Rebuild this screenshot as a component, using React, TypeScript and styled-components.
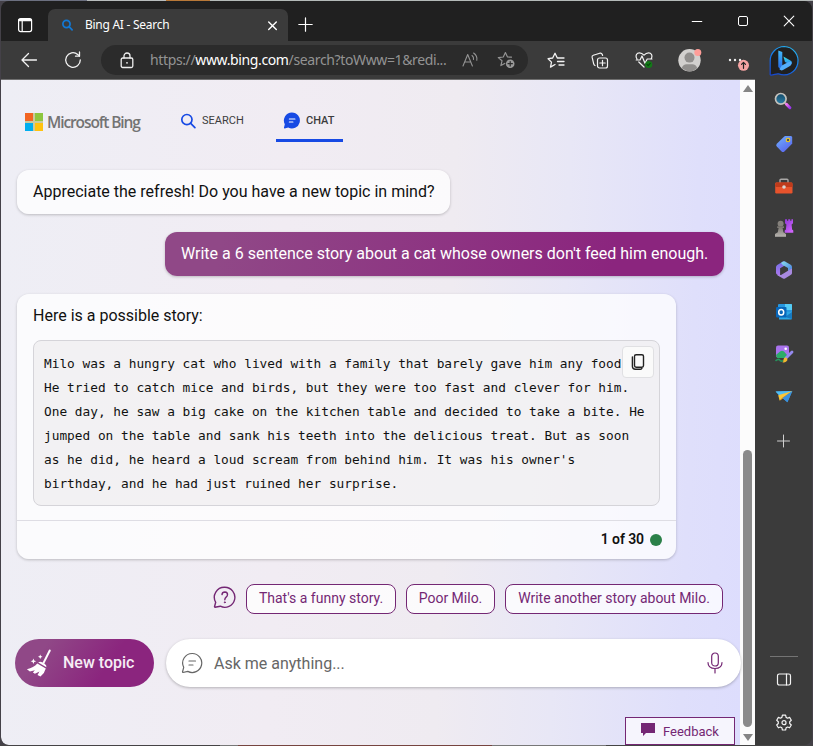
import React from "react";
import styled, { createGlobalStyle } from "styled-components";

const Global = createGlobalStyle`
  * { box-sizing: border-box; }
  html, body { margin: 0; padding: 0; overflow: hidden; }
  button { font: inherit; padding: 0; margin: 0; border: 0; background: none; color: inherit; }
  svg { display: block; flex: none; }
`;

const ui = `"Noto Sans", "Open Sans", sans-serif`;
const plum = "#742774";

const Desktop = styled.div`
  width: 813px;
  height: 746px;
  padding: 1px;
  background: linear-gradient(90deg, #6c7080 0 87px, #b8bcbc 87px 166px, #b87838 166px 210px, #b4bab8 210px) top / 100% 1px no-repeat,
    linear-gradient(90deg, #454345 0 220px, #777 220px 238px, #76443f 238px 492px, #777 492px 606px, #444 606px) bottom / 100% 1px no-repeat,
    #444148;
`;

const Window = styled.div`
  width: 811px;
  height: 744px;
  display: flex;
  flex-direction: column;
  overflow: hidden;
  border-radius: 8px;
  background: #3b3b3b;
`;

const TitleBar = styled.header`
  height: 40px;
  flex: none;
  display: flex;
  background: #202020;
  color: #fff;
  padding-top: 8px;
`;

const TabActions = styled.button`
  width: 47px;
  display: flex;
  padding: 7px 0 0 16px;
`;

const Tab = styled.div`
  width: 240px;
  height: 32px;
  display: flex;
  align-items: center;
  padding: 0 10px 0 14px;
  border-radius: 7px 7px 0 0;
  background: #3b3b3b;
`;

const TabTitle = styled.span`
  flex: 1;
  margin-left: 12px;
  font: 12px/16px ${ui};
  letter-spacing: -0.27px;
  white-space: nowrap;
`;

const NewTab = styled.button`
  width: 34px;
  height: 31px;
  display: grid;
  place-items: center;
`;

const WindowButtons = styled.div`
  margin-left: auto;
  display: flex;
  height: 24px;
`;

const WindowButton = styled.button`
  width: 46px;
  display: grid;
  place-items: center;
`;

const Body = styled.div`
  flex: 1;
  min-height: 0;
  display: flex;
`;

const Main = styled.div`
  width: 754px;
  flex: none;
  display: flex;
  flex-direction: column;
`;

const Toolbar = styled.nav`
  height: 39px;
  flex: none;
  display: flex;
  align-items: center;
  border-bottom: 1px solid #707070;
  color: #f3f3f3;
`;

const ToolButton = styled.button<{ $w?: number }>`
  width: ${(p) => p.$w ?? 44}px;
  height: 38px;
  flex: none;
  display: grid;
  place-items: center;
`;

const Address = styled.div`
  width: 427px;
  flex: none;
  height: 30px;
  margin: 0 6px 0 12px;
  display: flex;
  align-items: center;
  padding: 0 12px 0 19px;
  border-radius: 15px;
  background: #2b2b2b;
  color: #939393;
`;

const Url = styled.span`
  width: 298px;
  margin-left: 16px;
  font: 14px/20px ${ui};
  letter-spacing: -0.37px;
  white-space: nowrap;
  b { font-weight: 400; color: #fff; }
`;

const AddressIcons = styled.div`
  margin-left: auto;
  display: flex;
  align-items: center;
  gap: 18px;
`;

const Viewport = styled.div`
  flex: 1;
  display: flex;
  min-height: 0;
`;

const Page = styled.main`
  width: 739px;
  height: 665px;
  flex: none;
  position: relative;
  z-index: 1;
  display: flex;
  flex-direction: column;
  background: linear-gradient(92deg, #eeeef5 0%, #f1ecf3 38%, #efebf1 60%, #e8e7f6 75%, #dfdffb 92%, #ddddfd 100%);
  font-family: Roboto, sans-serif;
  border-radius: 0 0 0 7px;
`;

const PageHeader = styled.div`
  height: 62px;
  display: flex;
  padding-left: 24px;
`;

const Brand = styled.div`
  display: flex;
  align-items: center;
  width: 155px;
  height: 22px;
  margin-top: 31px;
  gap: 4px;
`;

const BrandName = styled.span`
  font: 600 15.5px/22px "Open Sans", sans-serif;
  letter-spacing: -1.1px;
  color: #737373;
  white-space: nowrap;
`;

const NavTab = styled.a<{ $active?: boolean; $w: number }>`
  width: ${(p) => p.$w}px;
  height: 43px;
  margin-top: 19px;
  display: flex;
  align-items: center;
  gap: 6px;
  font-size: 11px;
  font-weight: ${(p) => (p.$active ? 500 : 400)};
  color: #3c3c3c;
  ${(p) => p.$active && "padding: 3px 0 0 7px; border-bottom: 3px solid #174ae4; margin-left: 20px;"}
`;

const Bubble = styled.div<{ $mine?: boolean }>`
  width: ${(p) => (p.$mine ? 559 : 433)}px;
  height: 44px;
  margin: ${(p) => (p.$mine ? "18px 0 0 164px" : "28px 0 0 16px")};
  padding: 0 16px;
  border-radius: 12px;
  font-size: 16px;
  line-height: 43px;
  white-space: nowrap;
  color: ${(p) => (p.$mine ? "#fff" : "#111")};
  background: ${(p) => (p.$mine ? "linear-gradient(100deg, #904887 10%, #8b257e 80%)" : "rgba(255,255,255,.76)")};
  box-shadow: 0 1px 3px rgba(0, 0, 0, 0.22);
`;

const Card = styled.article`
  width: 659px;
  height: 265px;
  margin: 18px 0 0 16px;
  display: flex;
  flex-direction: column;
  border-radius: 12px;
  background: rgba(255, 255, 255, 0.76);
  box-shadow: 0 1px 3px rgba(0, 0, 0, 0.22);
`;

const Intro = styled.p`
  height: 46px;
  margin: 0;
  padding: 0 16px;
  font-size: 16px;
  line-height: 43px;
  color: #111;
`;

const CodeBox = styled.div`
  position: relative;
  height: 166px;
  margin: 0 16px 14px;
  padding: 11px 10px;
  border: 1px solid #d5d4d9;
  border-radius: 8px;
  background: rgba(233, 231, 234, 0.5);
`;

const Story = styled.pre`
  margin: 0;
  font: 12.8px/24px "DejaVu Sans Mono", monospace;
  letter-spacing: -0.005px;
  color: #111;
`;

const CopyButton = styled.button`
  position: absolute;
  top: 5px;
  right: 5px;
  width: 32px;
  height: 32px;
  display: grid;
  place-items: center;
  border: 1px solid #e0e0e3;
  border-radius: 4px;
  background: #fafafa;
`;

const CardFooter = styled.footer`
  flex: 1;
  display: flex;
  align-items: center;
  justify-content: flex-end;
  gap: 6px;
  padding: 0 14px 2px 0;
  border-top: 1px solid #dedde4;
  font-size: 14px;
  font-weight: 600;
  letter-spacing: -0.1px;
  color: #111;
`;

const Dot = styled.i`
  width: 12px;
  height: 12px;
  margin-top: 2px;
  border-radius: 50%;
  background: #2b8049;
`;

const Suggestions = styled.div`
  height: 30px;
  margin: 25px 17px 0 0;
  display: flex;
  justify-content: flex-end;
  align-items: center;
  gap: 10px;
`;

const HelpIcon = styled.span`
  margin: -2px 0 0 0;
`;

const Suggestion = styled.button<{ $w: number }>`
  width: ${(p) => p.$w}px;
  height: 30px;
  border: 1px solid ${plum};
  border-radius: 8px;
  background: rgba(255, 255, 255, 0.76);
  font-size: 14px;
  line-height: 26px;
  padding-bottom: 2px;
  color: ${plum};
  white-space: nowrap;
`;

const Composer = styled.div`
  height: 48px;
  margin: 25px 0 0 14px;
  display: flex;
  gap: 12px;
`;

const NewTopic = styled.button`
  width: 139px;
  flex: none;
  display: flex;
  align-items: center;
  gap: 10px;
  padding: 0 0 1px 11px;
  border-radius: 24px;
  background: linear-gradient(125deg, #904887 20%, #8b257e 65%);
  color: #f6edf5;
  font-size: 16px;
  font-weight: 500;
  white-space: nowrap;
`;

const Ask = styled.div`
  width: 575px;
  flex: none;
  display: flex;
  align-items: center;
  padding: 0 18px 0 15px;
  border-radius: 24px;
  background: #fff;
  box-shadow: 0 1px 3px rgba(0, 0, 0, 0.26);
  font-size: 16px;
  color: #666;
`;

const Placeholder = styled.span`
  flex: 1;
  margin-left: 11px;
`;

const Feedback = styled.button`
  align-self: flex-end;
  width: 110px;
  height: 28px;
  margin: 30px 5px 0 0;
  display: flex;
  align-items: center;
  gap: 8px;
  padding-left: 15px;
  border: 1px solid ${plum};
  background: #f6f5fd;
  color: ${plum};
  font-size: 13px;
`;

const FlagIcon = styled.svg`
  margin-top: -4px;
`;

const Scrollbar = styled.div`
  width: 15px;
  display: flex;
  flex-direction: column;
  align-items: center;
  padding: 5px 0 4px;
  background: #fcfcfc;
`;

const Thumb = styled.div`
  width: 9px;
  height: 277px;
  margin: auto 0 7px;
  border-radius: 5px;
  background: #8b8b8b;
`;

const Sidebar = styled.aside`
  flex: 1;
  display: flex;
  flex-direction: column;
  align-items: center;
  color: #f3f3f3;
  padding-left: 1px;
`;

const SideItem = styled.button<{ $h?: number }>`
  width: 42px;
  height: ${(p) => p.$h ?? 42}px;
  flex: none;
  display: grid;
  place-items: center;
`;

const Divider = styled.hr`
  width: 28px;
  height: 1px;
  border: 0;
  margin: auto 0 2px;
  background: #747474;
`;

const story = `Milo was a hungry cat who lived with a family that barely gave him any food.
He tried to catch mice and birds, but they were too fast and clever for him.
One day, he saw a big cake on the kitchen table and decided to take a bite. He
jumped on the table and sank his teeth into the delicious treat. But as soon
as he did, he heard a loud scream from behind him. It was his owner's
birthday, and he had just ruined her surprise.`;

type IconProps = { w: number; h?: number; sw?: number; color?: string; children: React.ReactNode };
const Icon = ({ w, h = w, sw = 1.2, color = "currentColor", children }: IconProps) => (
  <svg width={w} height={h} viewBox={`0 0 ${w} ${h}`} fill="none" stroke={color} strokeWidth={sw} strokeLinecap="round" strokeLinejoin="round">
    {children}
  </svg>
);

const MagnifierIcon = () => (
  <svg width="20" height="18" viewBox="0 0 20 18">
    <defs>
      <linearGradient id="lens" x2="0" y2="1"><stop stopColor="#154a68" /><stop offset="1" stopColor="#2b80a8" /></linearGradient>
      <linearGradient id="handle" x2="1" y2="1"><stop stopColor="#f078ed" /><stop offset="1" stopColor="#9c35ee" /></linearGradient>
    </defs>
    <path d="m10.5 10.5 2 2" stroke="#aaa" strokeWidth="2" />
    <path d="m12.5 12.3 3.4 3.4" stroke="url(#handle)" strokeWidth="3" strokeLinecap="round" />
    <circle cx="6.8" cy="6.8" r="5.3" fill="url(#lens)" stroke="#c3c1bc" strokeWidth="1.7" />
  </svg>
);

const TagIcon = () => (
  <svg width="18" height="18" viewBox="0 0 18 18">
    <defs><linearGradient id="tag" x2=".7" y2="1"><stop stopColor="#71b4ff" /><stop offset="1" stopColor="#5965ed" /></linearGradient></defs>
    <path d="M9 1.7 10 1h6.2l1 1v6.2l-.8 1.2-7 7q-1.4 1.2-2.8 0l-4.8-4.9q-1.3-1.4 0-2.8Z" fill="url(#tag)" />
    <circle cx="13" cy="5" r="1.8" fill="#4b5260" stroke="#f3cc1b" strokeWidth="1.1" />
  </svg>
);

const ToolboxIcon = () => (
  <svg width="20" height="18" viewBox="0 0 20 18">
    <path d="M6 6V3.3q0-1 1-1h6q1 0 1 1V6" fill="none" stroke="#a9a7a6" strokeWidth="1.4" />
    <rect x="1.2" y="5.5" width="17.3" height="11" rx="1.2" fill="#e7532c" />
    <path d="M2 5.5h15.9l1 3.5-1.2 1H2L1 9Z" fill="#bf3b1b" />
    <circle cx="10" cy="10" r="1.8" fill="#d7d5d2" />
  </svg>
);

const ChessIcon = () => (
  <svg width="20" height="20" viewBox="0 0 20 20">
    <defs>
      <linearGradient id="pawn" x2="0" y2="1"><stop stopColor="#77736e" /><stop offset="1" stopColor="#b7b4af" /></linearGradient>
      <linearGradient id="rook" x2=".7" y2="1"><stop stopColor="#8e37d7" /><stop offset="1" stopColor="#cf65fb" /></linearGradient>
    </defs>
    <path d="M11 1.2h2v1.5h1.2V1.2h2v1.5h1.2V1.2H19v4l-1.4 1.3.5 5 1.2 1v2.2h-8.6v-2.2l1.2-1 .5-5L11 5.2Z" fill="url(#rook)" />
    <circle cx="6.6" cy="5.7" r="3" fill="#85817c" />
    <path d="M3.2 8.3H10v1.8H8.6l.8 4.2 2.6 1.8v2.7H1v-2.7l2.8-1.8.8-4.2H3.2Z" fill="url(#pawn)" />
  </svg>
);

const OfficeIcon = () => (
  <svg width="18" height="20" viewBox="0 0 18 20">
    <defs>
      <linearGradient id="o1" x2="0" y2="1"><stop stopColor="#716fe6" /><stop offset="1" stopColor="#b078ee" /></linearGradient>
      <linearGradient id="o2" x2="1" y2="1"><stop stopColor="#8ae0ed" /><stop offset="1" stopColor="#4275dd" /></linearGradient>
    </defs>
    <path d="M8 1.5 2.2 5Q1 5.8 1 7.2v5.5q0 1.2 1 1.9l3.1 1.8V8.2L12 4.3 10 1.6Q9 1 8 1.5Z" fill="url(#o1)" />
    <path d="m8 1.5 2-.1 5.7 3.4Q17 5.7 17 7v6.5l-4-2.7V8L8 5.2 6 3Z" fill="url(#o2)" />
    <path d="m13 10.8 4-2.4v4.5q0 1.2-1 1.9l-6 3.7q-1 .5-2 0l-6-3.6 4 .2Z" fill="#a889df" />
  </svg>
);

const OutlookIcon = () => (
  <svg width="18" height="18" viewBox="0 0 18 18">
    <rect x="3" y="1" width="14" height="12" rx="1" fill="#2797df" />
    <path d="M10 1h6q1 0 1 1v5h-7z" fill="#55ccf5" />
    <path d="M4 9h13v6.5q0 1-1 1H4Z" fill="#2ca6e5" />
    <path d="m17 9-7 5 7 2Z" fill="#177ac1" />
    <rect x="1" y="4" width="10.5" height="10.5" rx="1" fill="#0866b9" />
    <ellipse cx="6.2" cy="9.3" rx="2.5" ry="2.8" fill="none" stroke="#fff" strokeWidth="1.5" />
  </svg>
);

const ImageIcon = () => (
  <svg width="20" height="20" viewBox="0 0 20 20">
    <rect x="2" y="1.5" width="13" height="12" rx="2" fill="#a973ed" />
    <circle cx="11.7" cy="4.8" r="1.3" fill="#fff" />
    <path d="m2 11 4-3.5q2-1.4 4 0L13 11v3H3Z" fill="#2cab68" />
    <path d="M1.5 16.8q3-2.3 4.2-.8.8 1.7 3.8.8" fill="none" stroke="#27945d" strokeWidth="1.6" />
    <path d="m12 14 6-6" stroke="#9589ef" strokeWidth="2.8" strokeLinecap="round" />
    <path d="M10 14.2q2-1.4 3.2.2 1 2-1.2 3.4-2 1.2-3.6.4 1.4-.6.9-2Z" fill="#f2b92e" />
  </svg>
);

const PlaneIcon = () => (
  <svg width="20" height="16" viewBox="-.6 0 20 16">
    <path d="M1 3.4 17.7 3 12.8 14.3 7.5 9.8Z" fill="#3fa4e8" />
    <path d="m1 3.4 16.7-.4L4.6 7.6Z" fill="#4fbdf6" />
    <path d="M17.7 3 3.6 7.2 5 12.6Z" fill="#fac638" />
    <path d="M17.7 3 7.3 10 5 13Z" fill="#d9921f" />
    <path d="M17.7 3 12.8 14.3 8 10Z" fill="#398fdd" />
  </svg>
);

const BingIcon = () => (
  <svg width="32" height="32" viewBox="0 0 32 32">
    <defs>
      <linearGradient id="ring" x1=".7" y1="0" x2=".2" y2="1"><stop stopColor="#27b2ed" /><stop offset=".4" stopColor="#1680ed" /><stop offset="1" stopColor="#1748cf" /></linearGradient>
      <linearGradient id="bstem" x2="0" y2="1"><stop stopColor="#42bafa" /><stop offset="1" stopColor="#2465e6" /></linearGradient>
      <linearGradient id="bbowl" x2="0" y2="1"><stop stopColor="#3bdee4" /><stop offset="1" stopColor="#2987ee" /></linearGradient>
    </defs>
    <path d="M16.2 1.5a14.2 14.2 0 1 1-5.6 27.4c-2-.7-4.7 1.3-7.6 1.3-1.2 0-.8-1.3-.8-2.1V15.7A14.2 14.2 0 0 1 16.2 1.5Z" fill="#202020" stroke="url(#ring)" strokeWidth="1.2" />
    <path d="m10.3 5.6 4 1.5v14l-1.2 3.8-2.8-2.8Z" fill="url(#bstem)" />
    <path d="m15.4 11.6 7 3.9q2.4 1.6 1 3.7L20 18.6l-3-1.7Z" fill="url(#bbowl)" />
    <path d="m20 17.3-6.2 3.3-2.4 3.7q1.7 1.8 3.6.8l7.4-4.4q1.8-1.7.7-4.2Z" fill="#53aefa" />
  </svg>
);

const gearPath = "M7.4 1.2h3.2l.5 2.2 1.5.8 2-.8 1.7 2.8-1.6 1.5v1.8l1.6 1.5-1.7 2.8-2-.8-1.5.8-.5 2.2H7.4l-.5-2.2-1.5-.8-2 .8-1.7-2.8 1.6-1.5V7.7L1.7 6.2l1.7-2.8 2 .8 1.5-.8Z";

export default function App() {
  return (
    <>
      <Global />
      <Desktop>
        <Window>
          <TitleBar>
            <TabActions aria-label="Tab actions">
              <Icon w={16} h={17} sw={1.2}><rect x="1.6" y="2.6" width="13" height="13" rx="2" /><path d="M2.5 4h11.2" strokeWidth="2.6" /><path d="M5.2 5v10" /></Icon>
            </TabActions>
            <Tab>
              <Icon w={11} h={12} sw={1.7} color="#1278d4"><circle cx="4.5" cy="5" r="3.6" /><path d="m7.3 7.8 2.8 3" /></Icon>
              <TabTitle>Bing AI - Search</TabTitle>
              <Icon w={11} sw={1.4}><path d="m1.7 1.9 7.6 7.6m0-7.6L1.7 9.5" /></Icon>
            </Tab>
            <NewTab aria-label="New tab"><Icon w={15}><path d="M7.5.8v13.4M.8 7.5h13.4" /></Icon></NewTab>
            <WindowButtons>
              <WindowButton aria-label="Minimise"><Icon w={12} sw={1}><path d="M1.2 6.5h9.6" /></Icon></WindowButton>
              <WindowButton aria-label="Maximise"><Icon w={12} sw={1}><rect x="1.5" y="1.5" width="9" height="9" rx="1.5" /></Icon></WindowButton>
              <WindowButton aria-label="Close"><Icon w={12} sw={1.1}><path d="m1.2 1.2 9.6 9.6m0-9.6-9.6 9.6" /></Icon></WindowButton>
            </WindowButtons>
          </TitleBar>
          <Body>
            <Main>
              <Toolbar>
                <ToolButton $w={56} aria-label="Back"><Icon w={18} h={16} sw={1.3}><path d="M16.5 8H2m6.5-6.5L2 8l6.5 6.5" /></Icon></ToolButton>
                <ToolButton $w={32} aria-label="Reload"><Icon w={18} sw={1.3}><path d="M16.3 9A7.3 7.3 0 1 1 13.7 3.4L15.4 5" /><path d="M15.5 1v4.2h-4" /></Icon></ToolButton>
                <Address>
                  <Icon w={14} h={17} sw={1.3} color="#eee"><rect x="1.2" y="6" width="11.6" height="9.5" rx="1.5" /><path d="M4 6V4a3 3 0 0 1 6 0v2" /><circle cx="7" cy="10.8" r=".9" fill="#eee" stroke="none" /></Icon>
                  <Url>https://<b>www.bing.com</b>/search?toWww=1&amp;redi...</Url>
                  <AddressIcons>
                    <Icon w={17} h={16} sw={1.1}><path d="m1 14 4.7-11.5L10.4 14M2.7 10h6M10 3.5q2 1.5 1.5 4M11.6 1q4 2.8 3.2 7.3" /></Icon>
                    <Icon w={19} h={18} sw={1.2}><path d="M14.5 6.2 10.5 6 8.4 1.5 6.3 6l-5 .6 3.7 3.2-1.1 4.8 3.8-2.2" /><circle cx="13.2" cy="12.7" r="4.3" fill="#999" stroke="none" /><path d="M13.2 10.5v4.4M11 12.7h4.4" stroke="#2b2b2b" /></Icon>
                  </AddressIcons>
                </Address>
                <ToolButton aria-label="Favourites"><Icon w={18} h={17} sw={1.3}><path d="M11.5 6h-1.2L8 1.3 5.7 6l-4.6.7 3.4 3.4-1 5L8 12.5M12 6h5M10.5 9.5H17M12 13h5" /></Icon></ToolButton>
                <ToolButton aria-label="Collections"><Icon w={18} h={17} sw={1.2}><path d="M4 13.5q-1-.5-1.3-1.7L1.1 5.2Q.8 3.7 2.3 3.2l6.5-2q1.8-.4 2.5 1.3l.3 1" /><rect x="6.5" y="6" width="10" height="10" rx="2" /><path d="M11.5 8.3v5.4M8.8 11h5.4" /></Icon></ToolButton>
                <ToolButton aria-label="Browser essentials"><Icon w={18} h={18} sw={1.2}><path d="M2 8C-.2 4.3 2 1.8 4.4 1.8c2 0 3.2.8 4.6 2.4 1.4-1.6 2.6-2.4 4.6-2.4C16 1.8 18.2 4.3 16 8M1.2 9H5l2-4 3 7.3L12.2 8H17M3.8 11 9 16" /><circle cx="13.7" cy="13.5" r="3.6" fill="#137a18" stroke="none" /><path d="m12 13.4 1.2 1.2 2-2.2" stroke="#07490b" /></Icon></ToolButton>
                <ToolButton $w={48} aria-label="Profile">
                  <Icon w={24} h={25}><circle cx="11.5" cy="12.3" r="11.2" fill="#d2d0ce" stroke="none" /><circle cx="11.5" cy="9.6" r="5" fill="#918f8d" stroke="none" /><path d="M3.7 20.2q1.3-4 5-4h5.6q3.7 0 5 4-7 6-15.6 0Z" fill="#918f8d" stroke="none" /><circle cx="19.8" cy="4.5" r="3.5" fill="#ff9d98" stroke="none" /></Icon>
                </ToolButton>
                <ToolButton $w={48} aria-label="Settings and more"><Icon w={24} h={22}><g fill="#eee" stroke="none"><circle cx="4" cy="11" r="1.2" /><circle cx="9" cy="11" r="1.2" /><circle cx="14" cy="11" r="1.2" /></g><circle cx="17.5" cy="16.3" r="5.5" fill="#f5a3a2" stroke="none" /><path d="M17.5 19.3v-6m-2 2 2-2 2 2" stroke="#222" /></Icon></ToolButton>
              </Toolbar>
              <Viewport>
                <Page>
                  <PageHeader>
                    <Brand>
                      <svg width="18" height="18" viewBox="0 0 18 18"><path d="M0 0h18v18H0z" fill="#c9ca9e" /><path d="M0 0h8v8H0z" fill="#f26522" /><path d="M10 0h8v8h-8z" fill="#8dc63f" /><path d="M0 10h8v8H0z" fill="#00aeef" /><path d="M10 10h8v8h-8z" fill="#ffc20e" /></svg>
                      <BrandName>Microsoft Bing</BrandName>
                    </Brand>
                    <NavTab $w={76}>
                      <Icon w={16} sw={1.7} color="#174ae4"><circle cx="6.9" cy="6.6" r="5.1" /><path d="m10.7 10.4 4.2 4.2" /></Icon>
                      SEARCH
                    </NavTab>
                    <NavTab $w={67} $active>
                      <Icon w={17} color="#fff"><path d="M8.9.5a8 8 0 1 1-3.7 15.1l-3.4.8q-1 .1-.8-.9l.8-3.2A8 8 0 0 1 8.9.5Z" fill="#174ae4" stroke="none" /><path d="M6.4 7h5.5M6.4 10h3.5" /></Icon>
                      CHAT
                    </NavTab>
                  </PageHeader>
                  <Bubble>Appreciate the refresh! Do you have a new topic in mind?</Bubble>
                  <Bubble $mine>Write a 6 sentence story about a cat whose owners don't feed him enough.</Bubble>
                  <Card>
                    <Intro>Here is a possible story:</Intro>
                    <CodeBox>
                      <Story>{story}</Story>
                      <CopyButton aria-label="Copy"><Icon w={14} h={18} sw={1.4} color="#222"><rect x="3.5" y="1.7" width="9" height="12.5" rx="1.6" /><path d="M1.4 4v9.3q0 3 3 3h4.7q1.2 0 1.8-1" /></Icon></CopyButton>
                    </CodeBox>
                    <CardFooter>1 of 30<Dot /></CardFooter>
                  </Card>
                  <Suggestions>
                    <HelpIcon>
                      <Icon w={23} h={24} sw={1.4} color={plum}><path d="M11.8 1.3a10 10 0 1 1-4.5 18.9L2 21.3l-.5-.5 1.2-4.5A10 10 0 0 1 11.8 1.3Z" /><path d="M9 8.6q.2-2.6 2.9-2.6 2.7.2 2.6 2.7 0 1.4-1.4 2.4-1.3 1-1.3 2.6" /><circle cx="11.8" cy="16.3" r=".6" fill={plum} strokeWidth=".7" /></Icon>
                    </HelpIcon>
                    <Suggestion $w={150}>That's a funny story.</Suggestion>
                    <Suggestion $w={89}>Poor Milo.</Suggestion>
                    <Suggestion $w={218}>Write another story about Milo.</Suggestion>
                  </Suggestions>
                  <Composer>
                    <NewTopic>
                      <svg width="27" height="28" viewBox="0 0 27 28" fill="#fff">
                        <path d="M23 .8q1.5-.7 1.8.9l-6.6 13-1.7-1Z" />
                        <path d="M12.4 13.2q1.8-1 3.7 0l2.2 1.2q2.6 1.4 2.1 3.8l-8.1-4.7Z" />
                        <path d="m11.3 14.6 8.5 5q-1 4.4-5.3 8l-3-1.6 2-3.6-4.6 2.3-2-1.2 2-2.3-5 1.3-3-2.2q6.8-1.5 10.4-5.7Z" />
                        <path d="m7.4 9.5.8 2 2 .8-2 .8-.8 2-.8-2-2-.8 2-.8ZM14.2 5.5l.7 1.6 1.6.6-1.6.7-.7 1.6-.6-1.6-1.6-.7 1.6-.6Z" />
                      </svg>
                      New topic
                    </NewTopic>
                    <Ask>
                      <Icon w={22} color="#666"><path d="M11.2 1.5a9.5 9.5 0 1 1-4.4 17.9L2 20.5l-.5-.5 1.2-4.7A9.5 9.5 0 0 1 11.2 1.5Z" /><path d="M8 9h6.5M8 13h4" /></Icon>
                      <Placeholder>Ask me anything...</Placeholder>
                      <Icon w={16} h={22} color={plum}><rect x="4.7" y="1" width="6.6" height="13" rx="3.3" /><path d="M1 10.5q0 6 7 6t7-6M8 16.5V21" /></Icon>
                    </Ask>
                  </Composer>
                  <Feedback>
                    <FlagIcon width="14" height="15" viewBox="0 0 14 15"><path d="M0 1h14v10H5l-3 3v-3H0Z" fill={plum} /></FlagIcon>
                    Feedback
                  </Feedback>
                </Page>
                <Scrollbar>
                  <svg width="10" height="7" viewBox="0 0 10 7"><path d="m5 0 5 7H0Z" fill="#858585" /></svg>
                  <Thumb />
                  <svg width="10" height="7" viewBox="0 0 10 7"><path d="M0 0h10L5 7Z" fill="#858585" /></svg>
                </Scrollbar>
              </Viewport>
            </Main>
            <Sidebar>
              <SideItem $h={39} aria-label="Bing"><BingIcon /></SideItem>
              <SideItem aria-label="Search"><MagnifierIcon /></SideItem>
              <SideItem $h={43} aria-label="Shopping"><TagIcon /></SideItem>
              <SideItem aria-label="Tools"><ToolboxIcon /></SideItem>
              <SideItem aria-label="Games"><ChessIcon /></SideItem>
              <SideItem aria-label="Microsoft 365"><OfficeIcon /></SideItem>
              <SideItem aria-label="Outlook"><OutlookIcon /></SideItem>
              <SideItem aria-label="Image creator"><ImageIcon /></SideItem>
              <SideItem aria-label="Drop"><PlaneIcon /></SideItem>
              <SideItem $h={48} aria-label="Customise"><Icon w={14} sw={1} color="#d0d0d0"><path d="M6.5 1v12M.5 7h12" /></Icon></SideItem>
              <Divider />
              <SideItem aria-label="Toggle sidebar"><Icon w={16} h={14}><rect x="1.5" y="1" width="13" height="11" rx="1.7" /><path d="M10.5 1v11" /></Icon></SideItem>
              <SideItem $h={44} aria-label="Settings"><Icon w={18}><path d={gearPath} /><circle cx="9" cy="8.7" r="2" /></Icon></SideItem>
            </Sidebar>
          </Body>
        </Window>
      </Desktop>
    </>
  );
}
